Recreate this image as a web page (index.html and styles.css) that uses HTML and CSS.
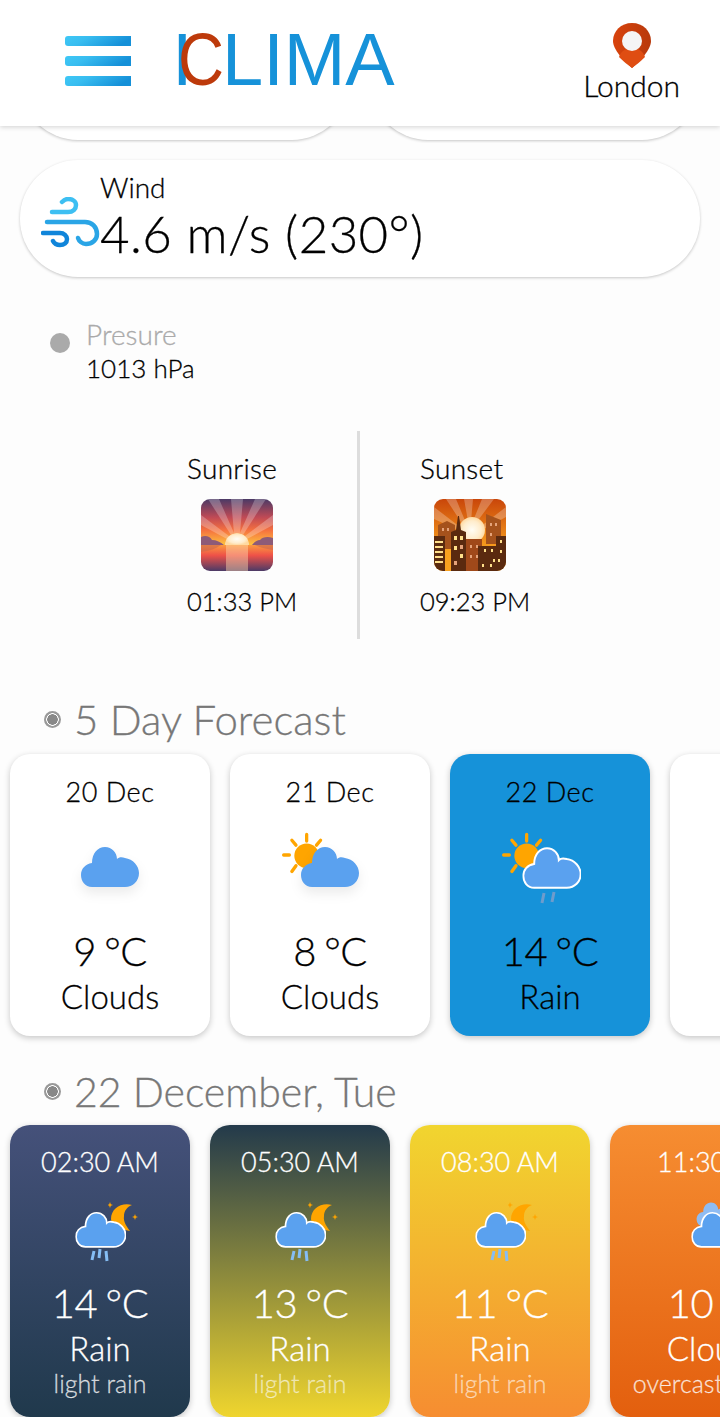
FILE: index.html
```html
<!DOCTYPE html>
<html>
    <head>
        <title>Clima</title>
        <meta name="viewport" content="width=device-width, initial-scale=1.0">
        <link rel="stylesheet" href="styles.css">
    </head>
    <body>
        <svg class="defs" width="0" height="0">
            <defs>
                <linearGradient id="barFill" x1="0" y1="0" x2="1" y2="0.25">
                    <stop offset="0" stop-color="#3fc8f6"/>
                    <stop offset="0.35" stop-color="#38bdf0"/>
                    <stop offset="1" stop-color="#1590d8"/>
                </linearGradient>
                <linearGradient id="pinFill" x1="0" y1="0" x2="1" y2="0">
                    <stop offset="0" stop-color="#d8430c"/>
                    <stop offset="1" stop-color="#b8390c"/>
                </linearGradient>
                <linearGradient id="riseSky" x1="0" y1="0" x2="0" y2="1">
                    <stop offset="0" stop-color="#4b3a66"/>
                    <stop offset="0.4" stop-color="#c04a55"/>
                    <stop offset="0.68" stop-color="#f5713f"/>
                    <stop offset="1" stop-color="#fdc33f"/>
                </linearGradient>
                <linearGradient id="riseSea" x1="0" y1="0" x2="0" y2="1">
                    <stop offset="0" stop-color="#fb9a3f"/>
                    <stop offset="0.4" stop-color="#ee5148"/>
                    <stop offset="1" stop-color="#4b3a66"/>
                </linearGradient>
                <linearGradient id="setSky" x1="0" y1="0" x2="0" y2="1">
                    <stop offset="0" stop-color="#c9460a"/>
                    <stop offset="0.7" stop-color="#f9a11f"/>
                </linearGradient>
                <radialGradient id="sunGlow">
                    <stop offset="0" stop-color="#fffdf5"/>
                    <stop offset="0.7" stop-color="#ffeccb"/>
                    <stop offset="1" stop-color="#ffd9a0"/>
                </radialGradient>

                <symbol id="cloud" viewBox="0 0 60 44">
                    <path d="M12 42C5 42 1 36 1 30C1 24 5 19 12 18C12 8 18 2 25 2C32 2 37 8 37 14C39 12 42 12 45 13C53 14 59 21 59 28C59 36 53 42 45 42Z"/>
                </symbol>
                <symbol id="sun" viewBox="0 0 56 56">
                    <circle cx="30" cy="29" r="15" fill="#ffa500"/>
                    <g stroke="#ffa500" stroke-width="4" stroke-linecap="round">
                        <path d="M30 3V11"/>
                        <path d="M12 10L17 16"/>
                        <path d="M47 10L42 16"/>
                        <path d="M2 28H9"/>
                        <path d="M12 48L17 41"/>
                    </g>
                </symbol>
                <symbol id="moon" viewBox="0 0 30 32">
                    <path d="M24 3C14 0 3 6 3 17C3 23 12 27 22 29C19 25 15 20 16 14C16 9 19 5 24 3Z" fill="#ffa500"/>
                    <path d="M2 0L2.8 2.2L5 3L2.8 3.8L2 6L1.2 3.8L-1 3L1.2 2.2Z" fill="#ffa500"/>
                    <path d="M27 12L27.8 14.2L30 15L27.8 15.8L27 18L26.2 15.8L24 15L26.2 14.2Z" fill="#ffa500"/>
                </symbol>
            </defs>
        </svg>

        <header class="top-bar">
            <svg class="menu-icon" width="66" height="50" viewBox="0 0 66 50">
                <path d="M3 0H66V10H3A3 3 0 0 1 0 7V3A3 3 0 0 1 3 0Z" fill="url(#barFill)"/>
                <path d="M3 20H66V30H3A3 3 0 0 1 0 27V23A3 3 0 0 1 3 20Z" fill="url(#barFill)"/>
                <path d="M3 40H66V50H3A3 3 0 0 1 0 47V43A3 3 0 0 1 3 40Z" fill="url(#barFill)"/>
            </svg>
            <div class="logo"><span class="logo-i">I</span><span class="logo-c">C</span>LIMA</div>
            <div class="place">
                <svg width="38" height="46" viewBox="0 0 38 46">
                    <path d="M19 0C8 0 0 8 0 18C0 27 12 39 19 45C26 39 38 27 38 18C38 8 30 0 19 0Z" fill="url(#pinFill)"/>
                    <path d="M6 34C8 28 13 25 19 25C25 25 30 28 32 34C28 38 23 42 19 45C15 42 10 38 6 34Z" fill="#df4d12"/>
                    <circle cx="19" cy="18" r="10" fill="#f5f5f5"/>
                </svg>
                <span>London</span>
            </div>
        </header>

        <main>
            <section class="peek-row">
                <div class="peek-card"></div>
                <div class="peek-card"></div>
            </section>

            <section class="wind-card">
                <svg class="wind-icon" width="60" height="52" viewBox="0 0 60 52">
                    <path d="M11 15H27C32 15 35 12 35 8C35 4 31 2 27 2C24 2 22 4 21 5" fill="none" stroke="#3dbff2" stroke-width="4.5" stroke-linecap="round"/>
                    <path d="M6 25H44C51 25 56 30 56 37C56 43 51 47 45 47C41 47 38 44 37 41" fill="none" stroke="#2aa5e6" stroke-width="4.5" stroke-linecap="round"/>
                    <path d="M2 36H19C23 36 26 39 26 42C26 46 23 48 19 48C16 48 13 46 12 44" fill="none" stroke="#1085da" stroke-width="4.5" stroke-linecap="round"/>
                </svg>
                <div class="wind-text">
                    <div class="wind-label">Wind</div>
                    <div class="wind-value">4.6 m/s (230°)</div>
                </div>
            </section>

            <section class="pressure">
                <span class="pressure-dot"></span>
                <div>
                    <div class="pressure-label">Presure</div>
                    <div class="pressure-value">1013 hPa</div>
                </div>
            </section>

            <section class="sun-times">
                <div class="sun-col sun-col-left">
                    <div class="sun-name">Sunrise</div>
                    <svg class="sun-pic" width="72" height="72" viewBox="0 0 72 72">
                        <clipPath id="riseClip"><rect width="72" height="72" rx="9"/></clipPath>
                        <g clip-path="url(#riseClip)">
                            <rect width="72" height="46" fill="url(#riseSky)"/>
                            <rect y="46" width="72" height="26" fill="url(#riseSea)"/>
                            <g fill="#fff" opacity="0.25">
                                <path d="M30 0H42L39 34H33Z"/>
                                <path d="M7 0H18L33 34L30 36Z"/>
                                <path d="M54 0H65L42 36L39 34Z"/>
                                <path d="M0 16L28 37L26 40L0 26Z"/>
                                <path d="M72 16L44 37L46 40L72 26Z"/>
                            </g>
                            <path d="M24 46A12 12 0 0 1 48 46Z" fill="url(#sunGlow)"/>
                            <rect x="25" y="46" width="22" height="26" fill="#ffd9b0" opacity="0.45"/>
                            <path d="M0 38C4 36 9 37 11 41C15 41 20 43 23 46H0Z" fill="#8d5b78"/>
                            <path d="M72 39C67 37 61 38 59 41C55 41 53 44 51 46H72Z" fill="#8d5b78"/>
                            <path d="M0 46H20C14 50 8 52 0 53Z" fill="#c9684f" opacity="0.6"/>
                            <path d="M72 46H54C60 49 66 50 72 51Z" fill="#c9684f" opacity="0.6"/>
                        </g>
                    </svg>
                    <div class="sun-time">01:33 PM</div>
                </div>
                <div class="sun-col">
                    <div class="sun-name">Sunset</div>
                    <svg class="sun-pic" width="72" height="72" viewBox="0 0 72 72">
                        <clipPath id="setClip"><rect width="72" height="72" rx="9"/></clipPath>
                        <g clip-path="url(#setClip)">
                            <rect width="72" height="72" fill="url(#setSky)"/>
                            <g fill="#fff" opacity="0.25">
                                <path d="M30 0H39L37 22H34Z"/>
                                <path d="M12 0H22L32 24L29 26Z"/>
                                <path d="M48 0H60L42 24L39 22Z"/>
                                <path d="M0 8L26 28L24 31L0 20Z"/>
                                <path d="M72 8L46 28L48 31L72 18Z"/>
                            </g>
                            <circle cx="38" cy="31" r="13" fill="url(#sunGlow)"/>
                            <path d="M4 26L13 22L21 26V50H4Z" fill="#a5521c"/>
                            <path d="M52 15L67 21V45H52Z" fill="#a5521c"/>
                            <path d="M32 40H48V72H32Z" fill="#a0491a"/>
                            <path d="M0 37H11V72H0Z" fill="#5a2a0f"/>
                            <path d="M17 33L22 31L24 17H25L27 31L32 33V72H17Z" fill="#5a2a0f"/>
                            <path d="M44 47H62V37H72V72H44Z" fill="#5a2a0f"/>
                            <g fill="#ffe08a">
                                <rect x="1" y="42" width="8" height="2"/>
                                <rect x="1" y="47" width="8" height="2"/>
                                <rect x="1" y="52" width="8" height="2"/>
                                <rect x="1" y="57" width="8" height="2"/>
                                <rect x="1" y="62" width="8" height="2"/>
                                <rect x="20" y="37" width="3" height="4"/>
                                <rect x="26" y="37" width="3" height="4"/>
                                <rect x="20" y="47" width="3" height="4"/>
                                <rect x="26" y="55" width="3" height="4"/>
                                <rect x="50" y="50" width="2" height="3"/>
                                <rect x="57" y="50" width="2" height="3"/>
                                <rect x="66" y="41" width="2" height="3"/>
                                <rect x="66" y="51" width="2" height="3"/>
                                <rect x="59" y="60" width="2" height="3"/>
                                <rect x="64" y="60" width="2" height="3"/>
                                <rect x="48" y="65" width="2" height="3"/>
                                <rect x="56" y="65" width="2" height="3"/>
                            </g>
                            <g fill="#e5a37a">
                                <rect x="8" y="29" width="2" height="3"/>
                                <rect x="13" y="29" width="2" height="3"/>
                                <rect x="56" y="24" width="2" height="3"/>
                                <rect x="61" y="24" width="2" height="3"/>
                                <rect x="56" y="34" width="2" height="3"/>
                                <rect x="36" y="46" width="2" height="3"/>
                                <rect x="42" y="46" width="2" height="3"/>
                                <rect x="36" y="56" width="2" height="3"/>
                                <rect x="42" y="56" width="2" height="3"/>
                                <rect x="20" y="62" width="3" height="4"/>
                                <rect x="26" y="46" width="3" height="4"/>
                            </g>
                        </g>
                    </svg>
                    <div class="sun-time">09:23 PM</div>
                </div>
            </section>

            <h2 class="section-title"><span class="bullet"></span>5 Day Forecast</h2>
            <section class="card-row">
                <div class="day-card">
                    <div class="day-date">20 Dec</div>
                    <div class="day-icon">
                        <svg class="ic-cloud plain" width="60" height="44"><use href="#cloud"/></svg>
                    </div>
                    <div class="temp">9 °C</div>
                    <div class="cond">Clouds</div>
                </div>
                <div class="day-card">
                    <div class="day-date">21 Dec</div>
                    <div class="day-icon">
                        <svg class="ic-sun" width="46" height="46"><use href="#sun"/></svg>
                        <svg class="ic-cloud plain" width="60" height="44"><use href="#cloud"/></svg>
                    </div>
                    <div class="temp">8 °C</div>
                    <div class="cond">Clouds</div>
                </div>
                <div class="day-card day-card-on">
                    <div class="day-date">22 Dec</div>
                    <div class="day-icon">
                        <svg class="ic-sun" width="46" height="46"><use href="#sun"/></svg>
                        <svg class="ic-cloud edged" width="60" height="44" viewBox="-1 -1 62 46"><use href="#cloud"/></svg>
                        <svg class="ic-rain ic-rain-day" width="20" height="14" viewBox="0 0 20 14"><path d="M6 2L4 12M16 1L14 11"/></svg>
                    </div>
                    <div class="temp">14 °C</div>
                    <div class="cond">Rain</div>
                </div>
                <div class="day-card"></div>
            </section>

            <h2 class="section-title title-date"><span class="bullet"></span>22 December, Tue</h2>
            <section class="card-row">
                <div class="hour-card hour-night">
                    <div class="hour-time">02:30 AM</div>
                    <div class="hour-icon">
                        <svg class="ic-moon" width="30" height="32"><use href="#moon"/></svg>
                        <svg class="ic-cloud edged" width="52" height="38" viewBox="-1 -1 62 46"><use href="#cloud"/></svg>
                        <svg class="ic-rain" width="20" height="14" viewBox="0 0 20 14"><path d="M4 3L2 12M10 1L9 10M16 3L17 13"/></svg>
                    </div>
                    <div class="temp">14 °C</div>
                    <div class="cond">Rain</div>
                    <div class="desc">light rain</div>
                </div>
                <div class="hour-card hour-dawn">
                    <div class="hour-time">05:30 AM</div>
                    <div class="hour-icon">
                        <svg class="ic-moon" width="30" height="32"><use href="#moon"/></svg>
                        <svg class="ic-cloud edged" width="52" height="38" viewBox="-1 -1 62 46"><use href="#cloud"/></svg>
                        <svg class="ic-rain" width="20" height="14" viewBox="0 0 20 14"><path d="M4 3L2 12M10 1L9 10M16 3L17 13"/></svg>
                    </div>
                    <div class="temp">13 °C</div>
                    <div class="cond">Rain</div>
                    <div class="desc desc-faint">light rain</div>
                </div>
                <div class="hour-card hour-morning">
                    <div class="hour-time">08:30 AM</div>
                    <div class="hour-icon">
                        <svg class="ic-moon" width="30" height="32"><use href="#moon"/></svg>
                        <svg class="ic-cloud edged" width="52" height="38" viewBox="-1 -1 62 46"><use href="#cloud"/></svg>
                        <svg class="ic-rain" width="20" height="14" viewBox="0 0 20 14"><path d="M4 3L2 12M10 1L9 10M16 3L17 13"/></svg>
                    </div>
                    <div class="temp">11 °C</div>
                    <div class="cond">Rain</div>
                    <div class="desc desc-faint">light rain</div>
                </div>
                <div class="hour-card hour-noon">
                    <div class="hour-time">11:30 AM</div>
                    <div class="hour-icon">
                        <svg class="ic-cloud ic-back" width="36" height="27" viewBox="0 0 60 44"><use href="#cloud"/></svg>
                        <svg class="ic-cloud edged" width="52" height="38" viewBox="-1 -1 62 46"><use href="#cloud"/></svg>
                    </div>
                    <div class="temp">10 °C</div>
                    <div class="cond">Clouds</div>
                    <div class="desc">overcast clouds</div>
                </div>
            </section>
        </main>
    </body>
</html>
```

FILE: styles.css
```css
* {
    box-sizing: border-box;
    font-family: "Lato", "Open Sans", sans-serif;
    font-weight: 300;
}

html, body {
    height: 1417px;
    overflow: hidden;
}

body {
    margin: 0px;
    background: #fdfdfd;
    color: #000;
    -webkit-text-stroke: 0.3px;
}

.defs {
    display: block;
    height: 0;
}

.top-bar {
    position: relative;
    z-index: 2;
    display: flex;
    align-items: flex-start;
    height: 126px;
    padding: 36px 40px 0 65px;
    background: #fff;
    box-shadow: 0 1px 5px rgba(0, 0, 0, 0.18);
}

.logo {
    margin: -14px 0 0 41px;
    font-family: "Liberation Sans", sans-serif;
    font-weight: 400;
    font-size: 74px;
    line-height: 76px;
    color: #1692d9;
    white-space: nowrap;
    -webkit-text-stroke: 0;
}

.logo span {
    display: inline-block;
    font-family: "Liberation Sans", sans-serif;
    font-weight: 400;
}

.logo-i {
    width: 6px;
}

.logo-c {
    width: 44px;
    color: #bd3a0b;
    transform: scaleX(0.86);
    transform-origin: left;
}

.place {
    display: flex;
    flex-direction: column;
    align-items: center;
    margin: -13px 0 0 auto;
    font-size: 30px;
    line-height: 32px;
}

.peek-row {
    display: flex;
    align-items: flex-end;
    gap: 20px;
    height: 17px;
    margin-bottom: -3px;
    padding: 0 20px 3px;
    overflow: hidden;
}

.peek-card {
    flex: none;
    width: 330px;
    height: 117px;
    background: #fff;
    border-radius: 58px;
    box-shadow: 0 1px 3px rgba(0, 0, 0, 0.22);
}

.wind-card {
    display: flex;
    align-items: center;
    width: 680px;
    height: 117px;
    margin: 20px 0 0 20px;
    padding: 0 0 0 21px;
    background: #fff;
    border-radius: 58px;
    box-shadow: 0 1px 3px rgba(0, 0, 0, 0.22);
}

.wind-icon {
    margin-top: 8px;
    flex: none;
}

.wind-text {
    margin-left: -1px;
}

.wind-label {
    font-size: 28px;
    line-height: 32px;
    margin-top: -1px;
}

.wind-value {
    font-size: 51px;
    line-height: 62px;
    letter-spacing: 0.4px;
    white-space: nowrap;
}

.pressure {
    display: flex;
    align-items: flex-start;
    margin: 41px 0 0 50px;
}

.pressure-dot {
    width: 20px;
    height: 20px;
    margin: 15px 16px 0 0;
    background: #aaa;
    border-radius: 50%;
}

.pressure-label {
    font-size: 28px;
    line-height: 33px;
    color: #aaa;
}

.pressure-value {
    font-size: 26px;
    line-height: 34px;
}

.sun-times {
    display: flex;
    height: 208px;
    margin: 46px 0 0 187px;
}

.sun-col {
    padding-top: 20px;
}

.sun-col-left {
    width: 173px;
    height: 208px;
    border-right: 3px solid #ddd;
    margin-right: 60px;
}

.sun-name {
    font-size: 28px;
    line-height: 34px;
    letter-spacing: 0.3px;
}

.sun-time {
    font-size: 25.5px;
    line-height: 34px;
    margin-top: 1px;
}

.sun-pic {
    display: block;
    margin: 14px 0 13px 14px;
}

.section-title {
    display: flex;
    align-items: center;
    height: 44px;
    margin: 58px 0 13px 44px;
    font-size: 42px;
    color: #777;
}

.title-date {
    margin: 33px 0 12px 44px;
    font-size: 41px;
}

.bullet {
    width: 17px;
    height: 17px;
    margin-right: 13px;
    background: radial-gradient(circle, #888 0, #888 5px, #fff 5.5px, #fff 6px, #999 6.5px);
    border-radius: 50%;
}

.card-row {
    display: flex;
    gap: 20px;
    padding-left: 10px;
    white-space: nowrap;
}

.day-card {
    flex: none;
    width: 200px;
    height: 282px;
    padding-top: 21px;
    text-align: center;
    background: #fff;
    border-radius: 20px;
    box-shadow: 0 2px 6px rgba(0, 0, 0, 0.22);
}

.day-card-on {
    background: #1692d9;
}

.day-date, .hour-time {
    font-size: 27px;
    line-height: 34px;
}

.day-date {
    letter-spacing: 0.5px;
}

.day-icon {
    position: relative;
    height: 97px;
    margin-top: 20px;
}

.temp {
    font-size: 40px;
    line-height: 50px;
    letter-spacing: -0.5px;
    word-spacing: -2px;
}

.cond {
    font-size: 33px;
    line-height: 40px;
}

.hour-card {
    flex: none;
    width: 180px;
    height: 292px;
    padding-top: 20px;
    text-align: center;
    color: #fff;
    border-radius: 20px;
    box-shadow: 0 2px 6px rgba(0, 0, 0, 0.22);
}

.hour-night {
    background: linear-gradient(#45517a, #20394c);
}

.hour-dawn {
    background: linear-gradient(#233a4b, #efd52e);
}

.hour-morning {
    background: linear-gradient(#f1d52f, #f68d31);
}

.hour-noon {
    width: 212px;
    background: linear-gradient(#f68d31, #e35f0e);
}

.hour-icon {
    position: relative;
    height: 67px;
    margin: 18px 0 14px;
}

.desc {
    font-size: 25px;
    line-height: 30px;
    color: rgba(255, 255, 255, 0.75);
}

.desc-faint {
    color: rgba(255, 255, 255, 0.55);
}

.ic-cloud {
    position: absolute;
    fill: #5aa1ef;
}

.plain {
    top: 16px;
    left: 70px;
    filter: drop-shadow(0 6px 6px rgba(0, 0, 0, 0.08));
}

.edged {
    stroke: #fff;
    stroke-width: 2;
}

.day-card .edged {
    top: 16px;
    left: 71px;
}

.hour-card .edged {
    top: 13px;
    left: 64px;
}

.hour-noon .edged {
    left: 80px;
}

.ic-sun {
    position: absolute;
    top: 3px;
    left: 52px;
}

.ic-moon {
    position: absolute;
    top: 5px;
    left: 98px;
}

.ic-rain {
    position: absolute;
    top: 51px;
    left: 80px;
    fill: none;
    stroke: #85bdf4;
    stroke-width: 3;
}

.ic-rain-day {
    top: 62px;
    left: 88px;
    stroke: #6e9ccc;
}

.ic-back {
    top: 4px;
    left: 86px;
    fill: #8fbcf2;
}
```
